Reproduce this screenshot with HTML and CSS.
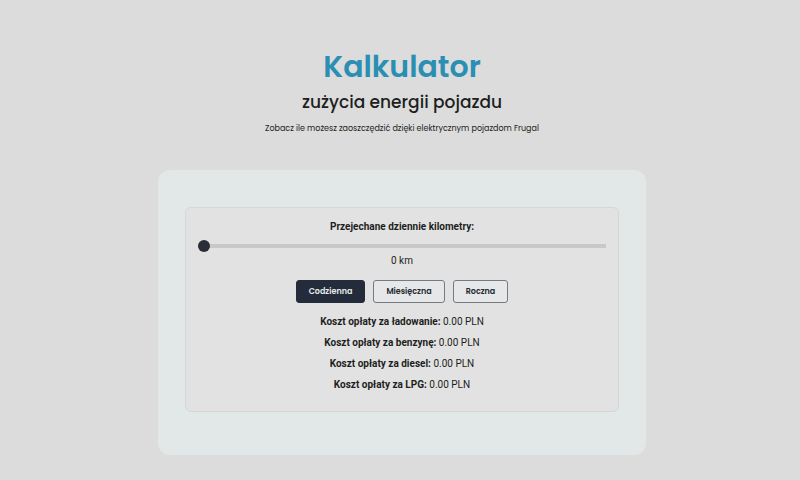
FILE: index.html
```html
<!DOCTYPE html>
<html lang="pl">
<head>
  <meta charset="UTF-8" />
  <meta name="viewport" content="width=device-width, initial-scale=1.0"/>
  <title>Kalkulator zużycia energii pojazdu</title>
  <link rel="stylesheet" href="styles.css">
</head>
<body>
  <main class="page">
    <header class="header">
      <h1 class="title">Kalkulator</h1>
      <h2 class="subtitle">zużycia energii pojazdu</h2>
      <p class="lead">Zobacz ile możesz zaoszczędzić dzięki elektrycznym pojazdom Frugal</p>
    </header>

    <section class="card">
      <div class="calculator">
        <label class="label" for="distance">Przejechane dziennie kilometry:</label>
        <input class="slider" type="range" id="distance" min="0" max="500" value="0">
        <output class="distance" id="distanceValue" for="distance">0 km</output>

        <div class="periods">
          <button class="btn active" type="button" data-days="1">Codzienna</button>
          <button class="btn" type="button" data-days="30">Miesięczna</button>
          <button class="btn" type="button" data-days="365">Roczna</button>
        </div>

        <div class="results">
          <p class="result"><strong>Koszt opłaty za ładowanie:</strong> <span data-rate="0.12">0.00</span> PLN</p>
          <p class="result"><strong>Koszt opłaty za benzynę:</strong> <span data-rate="0.45">0.00</span> PLN</p>
          <p class="result"><strong>Koszt opłaty za diesel:</strong> <span data-rate="0.39">0.00</span> PLN</p>
          <p class="result"><strong>Koszt opłaty za LPG:</strong> <span data-rate="0.28">0.00</span> PLN</p>
        </div>
      </div>
    </section>
  </main>

  <script>
    const slider = document.getElementById('distance');
    const distanceValue = document.getElementById('distanceValue');
    const buttons = document.querySelectorAll('.btn');
    let days = 1;

    function updateCosts() {
      distanceValue.textContent = slider.value + ' km';
      document.querySelectorAll('[data-rate]').forEach(function(cost) {
        cost.textContent = (slider.value * cost.dataset.rate * days).toFixed(2);
      });
    }

    buttons.forEach(function(button) {
      button.addEventListener('click', function() {
        buttons.forEach(b => b.classList.remove('active'));
        button.classList.add('active');
        days = Number(button.dataset.days);
        updateCosts();
      });
    });

    slider.addEventListener('input', updateCosts);
  </script>
</body>
</html>
```

FILE: styles.css
```css
* {
  box-sizing: border-box;
}

body {
  background: #dcdcdc;
  margin: 0;
  font-family: Roboto, Arial, sans-serif;
  color: #1d1e20;
}

.page {
  display: flex;
  flex-direction: column;
  align-items: center;
  padding: 47px 0 24px 4px;
}

.header {
  font-family: 'Poppins', 'Inter', sans-serif;
  text-align: center;
  margin-bottom: 29px;
}

.title {
  color: #2a8fb3;
  font-size: 30px;
  font-weight: 600;
  line-height: 40px;
  margin: 0;
}

.subtitle {
  font-size: 17px;
  font-weight: 500;
  line-height: 30px;
  margin: 0;
}

.lead {
  font-size: 8px;
  line-height: 24px;
  margin: 0;
}

.card {
  background: #e2e8e8;
  border-radius: 12px;
  width: 100%;
  max-width: 488px;
  padding: 37px 27px 43px;
}

.calculator {
  background: #e2e2e2;
  border: 1px solid #d3d7d7;
  border-radius: 6px;
  display: flex;
  flex-direction: column;
  align-items: center;
  padding: 12px 12px 19px;
  font-size: 10px;
}

.label {
  font-weight: bold;
  line-height: 14px;
}

.slider {
  appearance: none;
  -webkit-appearance: none;
  background: linear-gradient(#c8c8c8, #c8c8c8) center / 100% 4px no-repeat;
  width: 100%;
  height: 12px;
  margin: 6px 0 2px;
  cursor: pointer;
}

.slider::-webkit-slider-thumb {
  -webkit-appearance: none;
  background: #292e37;
  border-radius: 50%;
  width: 12px;
  height: 12px;
}

.distance {
  line-height: 14px;
}

.periods {
  display: flex;
  gap: 8px;
  margin: 12px 0;
}

.btn {
  background: #e6e7e8;
  border: 1px solid #777a7e;
  border-radius: 3px;
  color: #24282f;
  font-family: 'Poppins', 'Inter', sans-serif;
  font-size: 8px;
  font-weight: 600;
  line-height: 13px;
  padding: 4px 12px;
  cursor: pointer;
}

.btn.active {
  background: #242c3b;
  border-color: #242c3b;
  color: #e9eaec;
}

.results {
  display: flex;
  flex-direction: column;
  gap: 7px;
  text-align: center;
}

.result {
  line-height: 14px;
  margin: 0;
}
```
